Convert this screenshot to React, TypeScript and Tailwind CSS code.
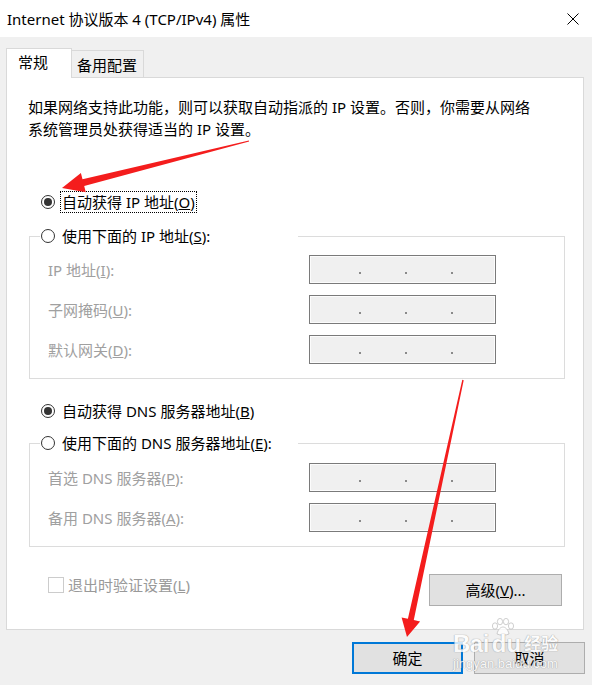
import React from "react";

function Radio({ checked }: { checked?: boolean }) {
  return (
    <span className="w-[14px] h-[14px] rounded-full border border-[#333333] bg-white flex items-center justify-center shrink-0">
      {checked && <span className="w-[8px] h-[8px] rounded-full bg-[#333333]" />}
    </span>
  );
}

function IpBox() {
  return (
    <div className="w-[187px] h-[29px] border border-[#7a7a7a] bg-[#f0f0f0] shadow-[inset_0_0_0_1px_#fcfcfc] flex items-end pb-[9px] pl-[49px] gap-[44px]">
      <span className="w-[2px] h-[2px] bg-[#8a8a8a]" />
      <span className="w-[2px] h-[2px] bg-[#8a8a8a]" />
      <span className="w-[2px] h-[2px] bg-[#8a8a8a]" />
    </div>
  );
}

function Field({ children }: { children: React.ReactNode }) {
  return (
    <div className="flex items-center h-[29px]">
      <span className="w-[261px] text-[#a0a0a0] whitespace-nowrap">{children}</span>
      <IpBox />
    </div>
  );
}

function arrowPoints(
  x1: number,
  y1: number,
  x2: number,
  y2: number,
  headLen: number,
  headHalf: number,
  w1: number,
  w2: number
) {
  const dx = x2 - x1;
  const dy = y2 - y1;
  const L = Math.hypot(dx, dy);
  const ux = dx / L;
  const uy = dy / L;
  const px = -uy;
  const py = ux;
  const bx = x2 - ux * headLen;
  const by = y2 - uy * headLen;
  const pts: [number, number][] = [
    [x1 + (px * w1) / 2, y1 + (py * w1) / 2],
    [bx + (px * w2) / 2, by + (py * w2) / 2],
    [bx + px * headHalf, by + py * headHalf],
    [x2, y2],
    [bx - px * headHalf, by - py * headHalf],
    [bx - (px * w2) / 2, by - (py * w2) / 2],
    [x1 - (px * w1) / 2, y1 - (py * w1) / 2],
  ];
  return pts.map((p) => `${p[0].toFixed(1)},${p[1].toFixed(1)}`).join(" ");
}

export default function App() {
  return (
    <div className="relative w-[592px] h-[685px] overflow-hidden bg-[#f0f0f0] text-black text-[15px] leading-[22px] font-['Noto_Sans','Noto_Sans_CJK_SC',sans-serif]">
      {/* Title bar */}
      <div className="h-[37px] bg-white flex items-center justify-between pl-[7px] pr-[13px]">
        <span className="text-[15px] whitespace-nowrap">Internet 协议版本 4 (TCP/IPv4) 属性</span>
        <svg width="12" height="12" viewBox="0 0 12 12" className="shrink-0">
          <path d="M0.5 0.5 L11.5 11.5 M11.5 0.5 L0.5 11.5" stroke="#000" strokeWidth="1" />
        </svg>
      </div>

      {/* Body */}
      <div className="pt-[11px]">
        {/* Tabs */}
        <div className="h-[30px] flex items-end pl-[6px]">
          <div className="relative z-10 w-[66px] h-[30px] bg-white border-t border-l border-r border-[#d9d9d9] pl-[11px] pt-[2px]">
            常规
          </div>
          <div className="-ml-px w-[73px] h-[28px] bg-[#f0f0f0] border border-[#d9d9d9] pl-[5px] pt-[3px]">
            备用配置
          </div>
        </div>

        {/* Panel */}
        <div className="-mt-px ml-[6px] w-[578px] h-[553px] bg-white border border-[#d9d9d9] flex flex-col">
          <div className="pt-[18px] pl-[21px] leading-[22px]">
            <div>如果网络支持此功能，则可以获取自动指派的 IP 设置。否则，你需要从网络</div>
            <div>系统管理员处获得适当的 IP 设置。</div>
          </div>

          {/* Radio 1 */}
          <div className="mt-[51px] h-[22px] pl-[34px] flex items-center">
            <Radio checked />
            <span className="ml-[5px] h-[22px] border border-dotted border-black pl-[1px] pr-[1px] flex items-center whitespace-nowrap">
              自动获得 IP 地址(<u>O</u>)
            </span>
          </div>

          {/* Group box 1 */}
          <div className="mt-[23px] ml-[22px] mr-[18px] border border-[#dcdcdc] pb-[14px]">
            <div className="-mt-[12px] ml-[10px] w-[258px] h-[22px] bg-white pl-px flex items-center">
              <Radio />
              <span className="ml-[7px] whitespace-nowrap">
                使用下面的 IP 地址(<u>S</u>):
              </span>
            </div>
            <div className="mt-[8px] pl-[18px] flex flex-col gap-[11px]">
              <Field>
                IP 地址(<u>I</u>):
              </Field>
              <Field>
                子网掩码(<u>U</u>):
              </Field>
              <Field>
                默认网关(<u>D</u>):
              </Field>
            </div>
          </div>

          {/* Radio 3 */}
          <div className="mt-[21px] h-[22px] pl-[34px] flex items-center">
            <Radio checked />
            <span className="ml-[7px] whitespace-nowrap">
              自动获得 DNS 服务器地址(<u>B</u>)
            </span>
          </div>

          {/* Group box 2 */}
          <div className="mt-[21px] ml-[22px] mr-[18px] border border-[#dcdcdc] pb-[14px]">
            <div className="-mt-[12px] ml-[10px] w-[258px] h-[22px] bg-white pl-px flex items-center">
              <Radio />
              <span className="ml-[7px] whitespace-nowrap">
                使用下面的 DNS 服务器地址(<u>E</u>):
              </span>
            </div>
            <div className="mt-[9px] pl-[18px] flex flex-col gap-[11px]">
              <Field>
                首选 DNS 服务器(<u>P</u>):
              </Field>
              <Field>
                备用 DNS 服务器(<u>A</u>):
              </Field>
            </div>
          </div>

          {/* Bottom row */}
          <div className="mt-[27px] flex items-start justify-between">
            <div className="ml-[41px] h-[22px] flex items-center">
              <span className="w-[16px] h-[16px] border border-[#cccccc] bg-white shrink-0" />
              <span className="ml-[4px] text-[#999999] whitespace-nowrap">
                退出时验证设置(<u>L</u>)
              </span>
            </div>
            <button className="mr-[21px] w-[133px] h-[32px] bg-[#e1e1e1] border border-[#adadad] flex items-center justify-center">
              高级(<u>V</u>)...
            </button>
          </div>
        </div>

        {/* Footer buttons */}
        <div className="mt-[12px] flex justify-end gap-[11px] pr-[7px]">
          <button className="w-[111px] h-[32px] bg-[#e1e1e1] border-2 border-[#0078d7] flex items-center justify-center">
            确定
          </button>
          <button className="w-[111px] h-[32px] bg-[#e1e1e1] border border-[#adadad] flex items-center justify-center">
            取消
          </button>
        </div>
      </div>

      {/* Watermark */}
      <div className="absolute left-[453px] top-[618px] w-[110px] pointer-events-none opacity-80 text-white [text-shadow:0_0_1px_#9a9a9a,0_0_1px_#9a9a9a]">
        <svg width="26" height="18" viewBox="0 0 26 18" className="ml-[37px]">
          <g fill="#ffffff" stroke="#b5b5b5" strokeWidth="0.8">
            <ellipse cx="5" cy="8" rx="2.6" ry="3.2" />
            <ellipse cx="10" cy="3.6" rx="2.6" ry="3.2" />
            <ellipse cx="16" cy="3.6" rx="2.6" ry="3.2" />
            <ellipse cx="21" cy="8" rx="2.6" ry="3.2" />
            <path d="M7 16 C8 11 11 9 13 9 C15 9 18 11 19 16 C16 17.5 10 17.5 7 16 Z" />
          </g>
        </svg>
        <div className="flex items-end leading-[20px] -mt-[2px]">
          <span className="text-[24px] font-bold tracking-[-0.5px] font-['Liberation_Sans',sans-serif]">Bai</span>
          <span className="text-[24px] font-bold font-['Liberation_Sans',sans-serif] ml-[3px]">du</span>
          <span className="text-[17px] font-bold ml-[3px]">经验</span>
        </div>
        <div className="text-[13px] leading-[14px] mt-[3px] font-['Liberation_Sans',sans-serif]">jingyan.baidu.com</div>
      </div>

      {/* Red annotation arrows */}
      <svg className="absolute left-0 top-0 pointer-events-none" width="592" height="685" viewBox="0 0 592 685">
        <polygon points={arrowPoints(249, 141, 62, 188, 22, 10, 1.2, 7)} fill="#f41d1d" />
        <polygon points={arrowPoints(463, 380, 407, 637, 18, 9.5, 1.5, 6)} fill="#f41d1d" />
      </svg>
    </div>
  );
}
